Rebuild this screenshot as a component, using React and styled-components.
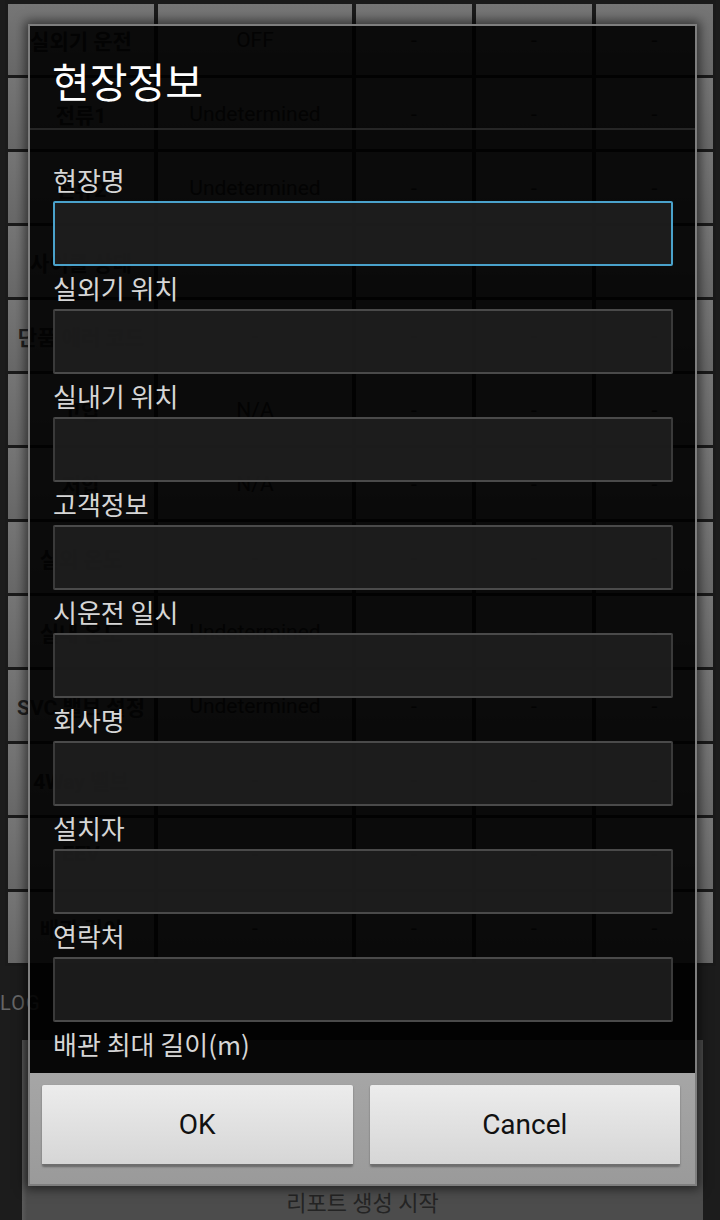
import styled, { createGlobalStyle } from "styled-components";

const GlobalStyle = createGlobalStyle`
  html, body {
    margin: 0;
    padding: 0;
    background: #1c1c1c;
    font-family: Roboto, "Noto Sans CJK KR", sans-serif;
  }
`;

const rows = [
  ["실외기 운전", "OFF", "-", "-", "-"],
  ["전류1", "Undetermined", "-", "-", "-"],
  ["전류2", "Undetermined", "-", "-", "-"],
  ["사이클 상태", "-", "-", "-", "-"],
  ["단품 에러 코드", "-", "-", "-", "-"],
  ["고압", "N/A", "-", "-", "-"],
  ["저압", "N/A", "-", "-", "-"],
  ["실외 온도", "-", "-", "-", "-"],
  ["실내 온도", "Undetermined", "-", "-", "-"],
  ["SVC 밸브 설정", "Undetermined", "-", "-", "-"],
  ["4Way 밸브", "-", "-", "-", "-"],
  ["EEV", "-", "-", "-", "-"],
  ["배관 길이", "-", "-", "-", "-"],
];

const fields = [
  "현장명",
  "실외기 위치",
  "실내기 위치",
  "고객정보",
  "시운전 일시",
  "회사명",
  "설치자",
  "연락처",
  "배관 최대 길이(m)",
];

export default function App() {
  return (
    <>
      <GlobalStyle />
      <Screen>
        <Table>
          {rows.map((r, i) =>
            r.map((c, j) => (
              <Cell key={i + "-" + j} $head={j === 0}>
                {c}
              </Cell>
            ))
          )}
        </Table>
        <LogLabel>LOG</LogLabel>
        <ReportButton>리포트 생성 시작</ReportButton>

        <Dialog>
          <Title>현장정보</Title>
          <Body>
            {fields.map((f, i) => (
              <Field key={f}>
                <Label>{f}</Label>
                {i < fields.length - 1 && <Input $focused={i === 0} />}
              </Field>
            ))}
          </Body>
          <ButtonBar>
            <DialogButton>OK</DialogButton>
            <DialogButton>Cancel</DialogButton>
          </ButtonBar>
        </Dialog>
      </Screen>
    </>
  );
}

const Screen = styled.div`
  position: relative;
  width: 720px;
  height: 1220px;
  overflow: hidden;
  background: #1c1c1c;
`;

const Table = styled.div`
  display: grid;
  grid-template-columns: 146px 194px 116px 116px 117px;
  grid-auto-rows: 71px;
  gap: 3px 4px;
  margin-left: 5px;
  width: 711px;
  box-sizing: border-box;
  padding: 4px 3px 3px 3px;
  background: #1a1a1a;
`;

const Cell = styled.div`
  display: flex;
  align-items: center;
  justify-content: center;
  white-space: nowrap;
  overflow: visible;
  background: linear-gradient(to bottom, #767676, #686868);
  color: #202020;
  font-size: 21px;
  font-weight: ${(p) => (p.$head ? 700 : 400)};
`;

const LogLabel = styled.div`
  height: 74px;
  display: flex;
  align-items: center;
  color: #666;
  font-size: 20px;
  letter-spacing: 1px;
`;

const ReportButton = styled.div`
  margin-left: 22px;
  width: 681px;
  height: 200px;
  box-sizing: border-box;
  padding-top: 145px;
  background: linear-gradient(to right, #5a5a5a 0, #4c4c4c 5px, #4c4c4c);
  color: #242424;
  font-size: 22px;
  text-align: center;
`;

const Dialog = styled.div`
  position: absolute;
  left: 28px;
  top: 24px;
  width: 669px;
  height: 1162px;
  box-sizing: border-box;
  border: 2px solid #7e7e7e;
  background: rgba(0, 0, 0, 0.9);
  box-shadow: 0 0 10px 3px rgba(0, 0, 0, 0.55);
  display: flex;
  flex-direction: column;
`;

const Title = styled.div`
  height: 104px;
  flex-shrink: 0;
  display: flex;
  align-items: center;
  padding: 6px 0 0 22px;
  box-sizing: border-box;
  border-bottom: 2px solid #262626;
  color: #fff;
  font-size: 41px;
  font-family: "Noto Sans CJK KR", sans-serif;
`;

const Body = styled.div`
  flex: 1;
  overflow: hidden;
  padding: 28px 0 0 23px;
`;

const Field = styled.div`
  display: flex;
  flex-direction: column;
`;

const Label = styled.div`
  height: 43px;
  display: flex;
  align-items: center;
  color: #d6d6d6;
  font-size: 26px;
  font-family: "Noto Sans CJK KR", sans-serif;
`;

const Input = styled.div`
  width: 620px;
  height: 65px;
  box-sizing: border-box;
  border-radius: 2px;
  background: rgba(30, 30, 30, 0.9);
  border: 2px solid ${(p) => (p.$focused ? "#4aa2cb" : "#3a3a3a")};
  border-top-color: ${(p) => (p.$focused ? "#4aa2cb" : "#4a4a4a")};
  border-bottom-color: ${(p) => (p.$focused ? "#4aa2cb" : "#4a4a4a")};
`;

const ButtonBar = styled.div`
  height: 111px;
  flex-shrink: 0;
  box-sizing: border-box;
  padding: 12px 15px 18px 12px;
  display: flex;
  gap: 17px;
  background: linear-gradient(to bottom, #a6a6a6, #9a9a9a);
`;

const DialogButton = styled.div`
  flex: 1;
  display: flex;
  align-items: center;
  justify-content: center;
  border-radius: 2px;
  background: linear-gradient(to bottom, #ececec, #d6d6d6);
  border-bottom: 2px solid #6e6e6e;
  box-shadow: 0 1px 2px rgba(0, 0, 0, 0.35);
  color: #111;
  font-size: 28px;
`;
